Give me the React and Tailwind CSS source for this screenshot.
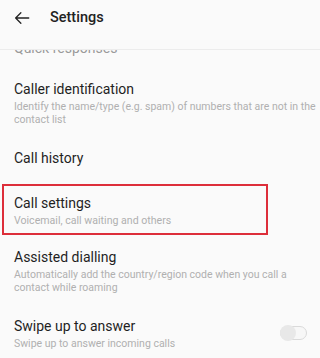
export default function App() {
  const items = [
    { title: 'Caller identification', sub: 'Identify the name/type (e.g. spam) of numbers that are not in the contact list' },
    { title: 'Call history' },
    { title: 'Call settings', sub: 'Voicemail, call waiting and others', highlight: true },
    { title: 'Assisted dialling', sub: 'Automatically add the country/region code when you call a contact while roaming' },
    { title: 'Swipe up to answer', sub: 'Swipe up to answer incoming calls', toggle: true },
  ];

  return (
    <div className="h-[358px] w-[320px] overflow-hidden bg-[#fafafa]" style={{ fontFamily: 'Roboto, "Noto Sans", sans-serif' }}>
      <div className="relative z-10 flex h-[50px] items-start border-b border-[#ececec] bg-[#fafafa] pt-[8px]">
        <svg className="ml-[13px] mt-[1px] h-[18px] w-[18px]" viewBox="0 0 24 24" fill="none" stroke="#222" strokeWidth="1.7" strokeLinecap="round" strokeLinejoin="round">
          <path d="M21 12H3.5M10.5 5l-7 7 7 7" />
        </svg>
        <span className="ml-[19px] text-[14.5px] font-medium leading-[20px] text-[#222]">Settings</span>
      </div>

      <div className="-mt-[12px] px-[14px] text-[14px] leading-[20px] text-[#9a9a9a]">Quick responses</div>

      <div className="mt-[10px] flex flex-col">
        {items.map((it) =>
          it.highlight ? (
            <div key={it.title} className="pb-[1px] pl-[2px] pr-[52px] pt-[5px]">
              <div className="border-2 border-[#dd2e3a] px-[10px] py-[6.5px]">
                <div className="text-[14px] leading-[20px] text-[#1f1f1f]">{it.title}</div>
                <div className="mt-[1px] text-[10.6px] leading-[13px] text-[#b0b0b0]">{it.sub}</div>
              </div>
            </div>
          ) : (
            <div key={it.title} className="flex items-center py-[11px] pl-[14px] pr-[2px]">
              <div className="flex-1">
                <div className="text-[14px] leading-[20px] text-[#1f1f1f]">{it.title}</div>
                {it.sub && (
                  <div className="mt-[1px] text-[10.5px] leading-[13px] text-[#b0b0b0]">{it.sub}</div>
                )}
              </div>
              {it.toggle && (
                <div className="mr-[11px] flex h-[14px] w-[27px] items-center rounded-full border border-[#dadada] bg-[#f7f7f7]">
                  <div className="-ml-[1px] h-[16px] w-[16px] rounded-full bg-[#e8e8e8]" />
                </div>
              )}
            </div>
          )
        )}
      </div>
    </div>
  );
}
